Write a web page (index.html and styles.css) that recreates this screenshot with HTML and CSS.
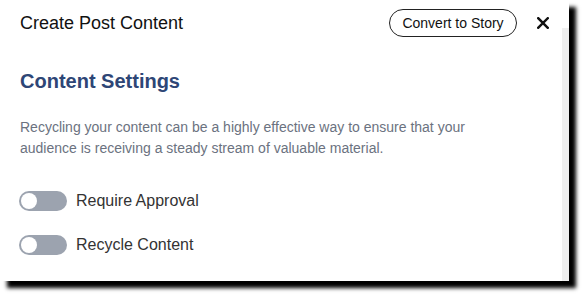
FILE: index.html
```html
<!DOCTYPE html>
<html>
<head>
<meta charset="utf-8">
<link rel="stylesheet" href="styles.css">
</head>
<body>
<div class="frame">
  <div class="main">
    <div class="header">
      <div class="title">Create Post Content</div>
      <button class="convert">Convert to Story</button>
      <span class="close" aria-label="Close">
        <svg width="12" height="12" viewBox="0 0 12 12"><path d="M1.2 1.2 L10.8 10.8 M10.8 1.2 L1.2 10.8" stroke="#111" stroke-width="2.4" stroke-linecap="square"/></svg>
      </span>
    </div>
    <h2 class="heading">Content Settings</h2>
    <p class="desc">Recycling your content can be a highly effective way to ensure that your audience is receiving a steady stream of valuable material.</p>
    <div class="options">
      <label class="option"><span class="toggle"><span class="knob"></span></span><span class="label">Require Approval</span></label>
      <label class="option"><span class="toggle"><span class="knob"></span></span><span class="label">Recycle Content</span></label>
    </div>
  </div>
  <div class="track"></div>
</div>
</body>
</html>
```
FILE: styles.css
```css
html, body {
  margin: 0;
  padding: 0;
  background: #fff;
}
body {
  font-family: "Liberation Sans", Arial, sans-serif;
  width: 582px;
  height: 295px;
  overflow: hidden;
}
.frame {
  width: 569px;
  height: 281px;
  background: #fff;
  display: flex;
  box-shadow: 7px 7px 4px #000;
}
.main {
  flex: 1;
  padding: 9px 13px 0 20px;
}
.track {
  width: 7px;
  margin-top: 28px;
  background: #efefef;
}
.header {
  display: flex;
  align-items: center;
  height: 28px;
}
.title {
  flex: 1;
  font-size: 18px;
  color: #111;
}
.convert {
  font-family: inherit;
  font-size: 14px;
  line-height: 16px;
  color: #111;
  background: #fff;
  border: 1px solid #222;
  border-radius: 14px;
  height: 28px;
  width: 128px;
  padding: 0;
}
.close {
  margin-left: 20px;
  width: 12px;
  height: 12px;
  display: flex;
}
.heading {
  margin: 32px 0 0;
  font-size: 20px;
  line-height: 24px;
  font-weight: bold;
  color: #2e4676;
}
.desc {
  margin: 24px 0 0;
  font-size: 14px;
  line-height: 21px;
  color: #6b7280;
  width: 470px;
}
.options {
  margin-top: 32px;
  display: flex;
  flex-direction: column;
  gap: 24px;
}
.option {
  display: flex;
  align-items: center;
  height: 20px;
  margin-left: -1px;
}
.toggle {
  width: 48px;
  height: 20px;
  border-radius: 10px;
  background: #9ca3af;
  display: flex;
  align-items: center;
  padding-left: 2px;
  box-sizing: border-box;
}
.knob {
  width: 16px;
  height: 16px;
  border-radius: 50%;
  background: #fff;
}
.label {
  margin-left: 9px;
  font-size: 16px;
  line-height: 20px;
  color: #333;
}
```
